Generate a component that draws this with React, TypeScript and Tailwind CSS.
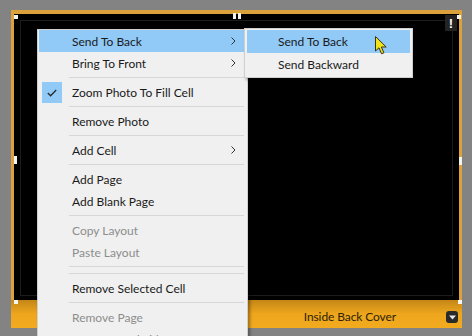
import React from 'react';

type Item =
  | { kind: 'sep' }
  | { kind: 'item'; label: string; sub?: boolean; active?: boolean; checked?: boolean; disabled?: boolean };

const menu: Item[] = [
  { kind: 'item', label: 'Send To Back', sub: true, active: true },
  { kind: 'item', label: 'Bring To Front', sub: true },
  { kind: 'sep' },
  { kind: 'item', label: 'Zoom Photo To Fill Cell', checked: true },
  { kind: 'sep' },
  { kind: 'item', label: 'Remove Photo' },
  { kind: 'sep' },
  { kind: 'item', label: 'Add Cell', sub: true },
  { kind: 'sep' },
  { kind: 'item', label: 'Add Page' },
  { kind: 'item', label: 'Add Blank Page' },
  { kind: 'sep' },
  { kind: 'item', label: 'Copy Layout', disabled: true },
  { kind: 'item', label: 'Paste Layout', disabled: true },
  { kind: 'sep' },
  { kind: 'sep' },
  { kind: 'item', label: 'Remove Selected Cell' },
  { kind: 'sep' },
  { kind: 'item', label: 'Remove Page', disabled: true },
  { kind: 'item', label: 'Swap Spread Sides', disabled: true },
];

const Chevron = () => (
  <svg width="5" height="8" viewBox="0 0 5 8" className="shrink-0">
    <path d="M0.5 0.5 L4 4 L0.5 7.5" fill="none" stroke="#333" strokeWidth="1" />
  </svg>
);

const Check = () => (
  <svg width="10" height="8" viewBox="0 0 10 8">
    <path d="M0.8 4 L3.6 6.8 L9.2 1" fill="none" stroke="#2b2b2b" strokeWidth="1.3" />
  </svg>
);

const Handle = ({ className }: { className: string }) => (
  <div className={`absolute bg-[#f4f4f0] ${className}`} />
);

export default function App() {
  return (
    <div className="relative w-[472px] h-[336px] overflow-hidden bg-[#838383] pl-[11px] pt-[10px] font-['Lato','Noto_Sans',sans-serif]">
      {/* photo cell frame */}
      <div className="w-[451px] flex flex-col bg-[#dba13a] pt-[4px] px-[3px]">
        <div className="h-[286px] bg-black pt-[6px] pb-[4px] px-[6px]">
          <div className="h-full border border-[#1c1c1c]" />
        </div>
        <div className="h-[28px] -mx-[3px] bg-gradient-to-b from-[#c48716] via-[#eea61d] to-[#f2aa1f] flex items-center justify-end pt-[6px] pr-[4px]">
          <span className="text-[12px] text-[#2e2208] tracking-[-0.1px]">Inside Back Cover</span>
          <div className="ml-[50px] w-[12px] h-[12px] rounded-[3px] bg-[#2a2a2a] flex items-center justify-center">
            <svg width="7" height="5" viewBox="0 0 7 5">
              <path d="M0 0.5 H7 L3.5 4.5 Z" fill="#e8e8e8" />
            </svg>
          </div>
        </div>
      </div>

      {/* selection handles */}
      <Handle className="left-[14px] top-[15px] w-[4px] h-[4px]" />
      <Handle className="left-[233px] top-[13px] w-[3px] h-[6px]" />
      <Handle className="left-[238px] top-[13px] w-[3px] h-[6px]" />
      <Handle className="left-[14px] top-[156px] w-[3px] h-[8px]" />
      <Handle className="left-[14px] top-[300px] w-[4px] h-[4px]" />
      <Handle className="left-[457px] top-[15px] w-[4px] h-[4px]" />
      <Handle className="left-[459px] top-[157px] w-[3px] h-[8px]" />
      <Handle className="left-[458px] top-[300px] w-[4px] h-[4px]" />

      {/* warning badge */}
      <div className="absolute left-[445px] top-[15px] w-[12px] h-[16px] bg-[#232323] flex items-center justify-center">
        <span className="text-[13px] font-bold leading-none text-white font-['Liberation_Sans',sans-serif]">!</span>
      </div>

      {/* context menu */}
      <div className="absolute left-[37px] top-[29px] w-[211px] h-[320px] bg-[#f0f0f0] border border-[#cfcfcf] shadow-[2px_2px_3px_rgba(0,0,0,0.35)] px-[1px] text-[12px]">
        {menu.map((it, i) =>
          it.kind === 'sep' ? (
            <div key={i} className="h-[7px] flex items-center pl-[30px] pr-[2px]">
              <div className="h-px w-full bg-[#d7d7d7]" />
            </div>
          ) : (
            <div
              key={i}
              className={`relative h-[22px] flex items-center pl-[33px] pr-[10px] ${it.active ? 'bg-[#91c9f7]' : ''} ${
                it.disabled ? 'text-[#8d8d8d]' : 'text-[#1a1a1a]'
              }`}
            >
              {it.checked && (
                <div className="absolute left-[3px] top-px w-[20px] h-[21px] bg-[#91c9f7] flex items-center justify-center">
                  <Check />
                </div>
              )}
              <span className="flex-1 pt-px">{it.label}</span>
              {it.sub && <Chevron />}
            </div>
          )
        )}
      </div>

      {/* submenu */}
      <div className="absolute left-[244px] top-[28px] w-[169px] h-[50px] bg-[#f0f0f0] border border-[#cfcfcf] shadow-[2px_2px_3px_rgba(0,0,0,0.35)] px-[2px] pt-[1px] text-[12px] text-[#1a1a1a]">
        <div className="h-[23px] flex items-center pl-[31px] pt-px bg-[#91c9f7]">Send To Back</div>
        <div className="h-[22px] flex items-center pl-[31px] pt-px">Send Backward</div>
      </div>

      {/* mouse pointer */}
      <svg className="absolute left-[375px] top-[36px]" width="13" height="19" viewBox="0 0 13 19">
        <path
          d="M0.5 0.5 L0.5 15 L4 11.8 L6.6 17.8 L8.9 16.8 L6.4 11 L11.2 11 Z"
          fill="#f2e21c"
          stroke="#3a3410"
          strokeWidth="1"
          strokeLinejoin="round"
        />
      </svg>
    </div>
  );
}
